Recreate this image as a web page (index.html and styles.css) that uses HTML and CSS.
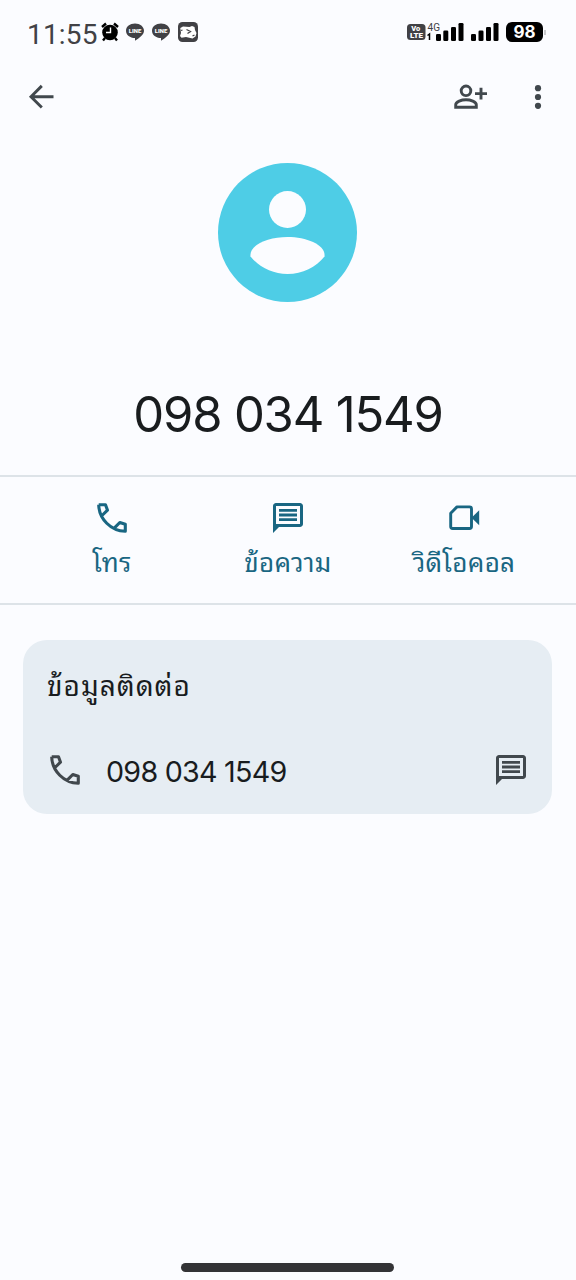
FILE: index.html
```html
<!DOCTYPE html>
<html lang="th">
<head>
<meta charset="utf-8">
<title>098 034 1549</title>
<link rel="stylesheet" href="styles.css">
</head>
<body>
<svg class="symbols" aria-hidden="true">
  <symbol id="phone" viewBox="0 0 40 40">
    <path d="M6.7 6.7H13.5L15.5 12.2L10 17.5M6.7 6.7C7 21 19 33 33.3 33.3V26.3L27.8 24.5L22.5 29.8" fill="none" stroke="currentColor" stroke-width="3.1" stroke-linejoin="round"/>
  </symbol>
  <symbol id="message" viewBox="0 0 24 24">
    <path fill="currentColor" d="M4 2h16c1.1 0 2 .9 2 2v12c0 1.100-.9 2-2 2H6l-4 4V4c0-1.100.9-2 2-2zm0 2v12h16V4zM6 6h12v1.900H6zM6 9.050h12v1.900H6zM6 12.100h12V14H6z"/>
  </symbol>
</svg>
<div class="screen">
  <div class="status">
    <span class="time">11:55</span>
    <svg class="alarm" viewBox="0 0 18 20">
      <circle cx="9" cy="10.500" r="7.800"/><path d="M1 5L5 1.500M13 1.500l4 3.500M4 16l-2 2.500M14 16l2 2.500" stroke="#000" stroke-width="2.400"/><path d="M9.500 5.500v5H5" fill="none" stroke="#fff" stroke-width="1.400"/>
    </svg>
    <svg class="line first" viewBox="0 0 20 20"><path d="M10 1.500c5 0 9 3.200 9 7.200 0 4-5 7.500-9 10v-2.700c-5 0-9-3.100-9-7.300s4-7.200 9-7.200z" fill="#414145"/><text x="10" y="10.700" text-anchor="middle" class="line-text" textLength="12.500" lengthAdjust="spacingAndGlyphs">LINE</text></svg>
    <svg class="line" viewBox="0 0 20 20"><path d="M10 1.500c5 0 9 3.200 9 7.200 0 4-5 7.500-9 10v-2.700c-5 0-9-3.100-9-7.300s4-7.200 9-7.200z" fill="#414145"/><text x="10" y="10.700" text-anchor="middle" class="line-text" textLength="12.500" lengthAdjust="spacingAndGlyphs">LINE</text></svg>
    <svg class="app" viewBox="0 0 20 20"><rect width="20" height="20" rx="4.500" fill="#414145"/><path d="M2.300 6L5 4.500l6.500.5L14 4l2.500 1 .5 3 1.500 3-1 3.500-3 2L8 15l-4.500.7L2 14l1-3z" fill="#fff"/><path d="M8.500 7.500l4 2-3 2M3 8.500l1.500-.5M14.500 14l2-1" fill="none" stroke="#414145" stroke-width="1.300"/></svg>
    <svg class="network" viewBox="0 0 92 24">
      <rect x="0" y="4" width="18.500" height="16" rx="3.500" fill="#414145"/>
      <text x="8.800" y="11.300" text-anchor="middle" class="volte" textLength="9" lengthAdjust="spacingAndGlyphs">Vo</text>
      <text x="9.500" y="18.200" text-anchor="middle" class="volte" textLength="13" lengthAdjust="spacingAndGlyphs">LTE</text>
      <text x="20.500" y="10.500" class="gen" textLength="12.500" lengthAdjust="spacingAndGlyphs">4G</text>
      <path d="M20.500 15.500l2-1.500v6" fill="none" stroke="#000" stroke-width="1.500"/>
      <g><rect x="29" y="14" width="5" height="7" rx="1.300"/><rect x="36.300" y="10.500" width="5" height="10.500" rx="1.300"/><rect x="44" y="7" width="5" height="14" rx="1.300"/><rect x="51.500" y="3" width="5" height="18" rx="1.300"/>
      <rect x="64" y="14" width="5" height="7" rx="1.300"/><rect x="71.500" y="10.500" width="5" height="10.500" rx="1.300"/><rect x="79" y="7" width="5" height="14" rx="1.300"/><rect x="86.500" y="3" width="5" height="18" rx="1.300"/></g>
    </svg>
    <span class="battery">98</span><span class="battery-tip"></span>
  </div>

  <div class="appbar">
    <svg class="back" viewBox="0 0 26 26"><path d="M25.500 12.700H3.500M13.800 1.900L3 12.700l10.800 10.800" fill="none" stroke="currentColor" stroke-width="2.900"/></svg>
    <svg class="add" viewBox="0 0 34 26">
      <g fill="none" stroke="currentColor" stroke-width="2.900"><circle cx="12" cy="6.800" r="4.800"/><path d="M1.700 23.300v-2.500c0-3 5.800-5 10.300-5s10.300 2 10.300 5v2.500zM21 9.600h12M27 3.700v11.800"/></g>
    </svg>
    <svg class="more" viewBox="0 0 8 24"><circle cx="4" cy="3.200" r="3.100"/><circle cx="4" cy="12" r="3.100"/><circle cx="4" cy="20.800" r="3.100"/></svg>
  </div>

  <svg class="avatar" viewBox="0 0 139 139">
    <circle cx="69.500" cy="69.500" r="69.500" fill="#4ecde6"/>
    <circle cx="69.500" cy="46.500" r="18.500" fill="#fbfcff"/>
    <path d="M32.500 93.500C31 82 50 74 69.500 74s38.500 8 37 19.500C98 104 84.500 111 69.500 111s-28.500-7-37-17.500z" fill="#fbfcff"/>
  </svg>
  <h1 class="number">098 034 1549</h1>

  <div class="actions">
    <div class="action"><svg class="phone"><use href="#phone"/></svg><span class="label call">โทร</span></div>
    <div class="action"><svg class="message"><use href="#message"/></svg><span class="label text">ข้อความ</span></div>
    <div class="action"><svg class="video" viewBox="0 0 40 40"><path d="M13 8.900H25.500a2 2 0 0 1 2 2V28.500a2 2 0 0 1-2 2H8.700a2 2 0 0 1-2-2V15.200z" fill="none" stroke="currentColor" stroke-width="2.900" stroke-linejoin="round"/><path d="M27.500 19.700l7.700-7.400v15z" fill="currentColor"/></svg><span class="label vdo">วิดีโอคอล</span></div>
  </div>

  <div class="card">
    <div class="card-title"><span>ข้อมูลติดต่อ</span></div>
    <div class="contact">
      <svg class="phone"><use href="#phone"/></svg>
      <span class="contact-number">098 034 1549</span>
      <svg class="message"><use href="#message"/></svg>
    </div>
  </div>
  <div class="home"></div>
</div>
</body>
</html>
```
FILE: styles.css
```css
* { box-sizing: border-box; }
body { margin: 0; background: #fbfcff; color: #191c1e; font-family: Roboto, "Noto Sans", sans-serif; }
svg { display: block; flex: none; }
.symbols { display: none; }
.screen { width: 576px; height: 1280px; display: flex; flex-direction: column; overflow: hidden; }

.status { height: 64px; padding-left: 27px; display: flex; align-items: center; }
.time { width: 74px; font-size: 28px; line-height: 28px; letter-spacing: .2px; color: #414145; padding-top: 5px; white-space: nowrap; }
.alarm { width: 18px; height: 20px; }
.line { width: 20px; height: 20px; margin-left: 6px; }
.line.first { margin-left: 6px; }
.line-text { font: 900 5px Roboto, sans-serif; fill: #fff; }
.app { width: 20px; height: 20px; margin-left: 7px; }
.network { width: 92px; height: 24px; margin-left: 209px; }
.volte { font: 900 7px Roboto, sans-serif; fill: #fff; }
.gen { font: 10px Roboto, sans-serif; fill: #414145; }
.battery { margin-left: 7px; width: 37px; height: 20px; border-radius: 6px; background: #000; color: #fff; font: 700 17px/20px Inter, sans-serif; text-align: center; }
.battery-tip { width: 1.500px; height: 5px; background: #c8c9cc; margin-left: 1px; }

.appbar { height: 66px; padding-left: 28px; display: flex; align-items: center; color: #41484d; }
.back { width: 26px; height: 26px; }
.add { width: 34px; height: 26px; margin-left: 400px; }
.more { width: 8px; height: 24px; margin-left: 46px; fill: currentColor; }

.avatar { width: 139px; height: 139px; margin: 33px auto 0 218px; }
.number { margin: 83px 0 0; height: 59px; font: 400 49px/60px Inter, sans-serif; letter-spacing: -1.200px; text-align: center; white-space: nowrap; }

.actions { margin-top: 31px; height: 130px; border-top: 2px solid #dde3e8; border-bottom: 2px solid #dde3e8; padding: 21px 24px 0; display: grid; grid-template-columns: repeat(3, 1fr); color: #196682; }
.action { display: flex; flex-direction: column; align-items: center; }
.action .message { width: 36px; height: 36px; margin: 2px 0; }
.phone, .video { width: 40px; height: 40px; }
.label, .card-title { font-family: "Noto Sans Thai Looped", "Noto Looped Thai", Loma, Waree, Garuda, Roboto, sans-serif; font-weight: 400; white-space: nowrap; }
.label { font-size: 26px; line-height: 40px; margin-top: 2px; letter-spacing: .3px; }

.card { margin: 35px 24px 0 23px; height: 174px; border-radius: 24px; background: #e6edf3; padding: 24px 24px 0; }
.card-title { height: 40px; font-size: 28px; line-height: 40px; letter-spacing: 1px; }
.contact { height: 40px; margin: 46px -1px 0 -2px; display: flex; align-items: center; color: #41484d; }
.contact .message { width: 36px; height: 36px; margin-left: auto; }
.contact-number { margin-left: 21px; padding-top: 3px; font: 400 28.700px/36px Inter, sans-serif; letter-spacing: -.75px; color: #191c1e; white-space: nowrap; }
.home { width: 213px; height: 9px; margin: auto auto 8px 181px; border-radius: 5px; background: #333336; }
```
